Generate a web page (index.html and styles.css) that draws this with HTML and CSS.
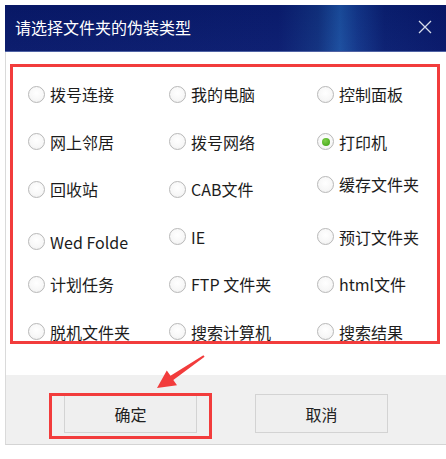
FILE: index.html
```html
<!DOCTYPE html>
<html lang="zh-CN">
<head>
    <meta charset="UTF-8">
    <meta name="viewport" content="width=device-width, initial-scale=1.0">
    <title>请选择文件夹的伪装类型</title>
    <link rel="stylesheet" href="styles.css">
</head>
<body>
    <div class="dialog">
        <div class="titlebar">
            <span class="title">请选择文件夹的伪装类型</span>
            <svg class="close" width="14" height="14" viewBox="0 0 14 14">
                <path d="M1 1 L13 13 M13 1 L1 13" stroke="#d6dbea" stroke-width="1.3" fill="none"/>
            </svg>
        </div>

        <!-- disguise types -->
        <div class="content">
            <div class="options">
                <label class="option"><span class="radio"></span>拨号连接</label>
                <label class="option"><span class="radio"></span>我的电脑</label>
                <label class="option"><span class="radio"></span>控制面板</label>

                <label class="option"><span class="radio"></span>网上邻居</label>
                <label class="option"><span class="radio"></span>拨号网络</label>
                <label class="option"><span class="radio checked"></span>打印机</label>

                <label class="option"><span class="radio"></span>回收站</label>
                <label class="option"><span class="radio"></span>CAB文件</label>
                <label class="option up"><span class="radio"></span>缓存文件夹</label>

                <label class="option down"><span class="radio"></span>Wed Folde</label>
                <label class="option"><span class="radio"></span>IE</label>
                <label class="option"><span class="radio"></span>预订文件夹</label>

                <label class="option"><span class="radio"></span>计划任务</label>
                <label class="option"><span class="radio"></span>FTP 文件夹</label>
                <label class="option"><span class="radio"></span>html文件</label>

                <label class="option"><span class="radio"></span>脱机文件夹</label>
                <label class="option"><span class="radio"></span>搜索计算机</label>
                <label class="option"><span class="radio"></span>搜索结果</label>
            </div>
        </div>

        <div class="footer">
            <button class="btn">确定</button>
            <button class="btn">取消</button>
        </div>
    </div>

    <!-- annotation marks -->
    <svg class="marks" width="446" height="459" viewBox="0 0 446 459">
        <rect x="50.5" y="394.5" width="160" height="43" fill="none" stroke="#f23c3c" stroke-width="3"/>
        <polygon fill="#f23c3c" points="157,388 166.8,370.5 170.5,375.8 203.4,355.2 204.6,356.8 173.3,380 177,385.3"/>
    </svg>
</body>
</html>
```

FILE: styles.css
```css
body {
    margin: 0;
    background: #fff;
    font-family: "Noto Sans CJK SC", "Noto Sans", sans-serif;
    color: #1c1c1c;
    width: 446px;
    height: 459px;
    position: relative;
    overflow: hidden;
}

.dialog {
    margin: 5px 0 0 5px;
    width: 441px;
}

.titlebar {
    height: 46px;
    border-bottom: 1px solid #4f62a4;
    display: flex;
    align-items: center;
    justify-content: space-between;
    padding: 0 14px 0 10px;
    background:
        linear-gradient(180deg, rgba(0, 0, 0, 0.05), rgba(255, 255, 255, 0.02)),
        linear-gradient(90deg, #08196b 0%, #0a1c70 62%, #10307f 71%, #1a4d9f 76%, #12358a 80%, #0a1f72 86%, #07176a 100%);
}

.title {
    color: #fff;
    font-size: 16px;
    line-height: 20px;
    margin-top: -2px;
}

.close {
    display: block;
    margin-top: -3px;
}

.content {
    background: #fff;
    border-left: 1px solid #dadada;
    padding: 12px 6px 31px 4px;
}

.options {
    border: 3px solid #f23c3c;
    display: grid;
    grid-template-columns: 141px 148px 1fr;
    grid-template-rows: repeat(6, 18px);
    row-gap: 29.6px;
    padding: 18px 0 0 15px;
    height: 280px;
    box-sizing: border-box;
}

.option {
    display: flex;
    align-items: center;
    height: 18px;
    font-size: 16px;
    line-height: 18px;
    white-space: nowrap;
}

.option.up {
    margin-top: -5px;
}

.option.down {
    margin-top: 5px;
}

.radio {
    width: 15px;
    height: 15px;
    border: 1px solid #b8b8b8;
    border-radius: 50%;
    background: radial-gradient(circle at 50% 40%, #ffffff 0%, #f7f7f7 60%, #e9e9e9 100%);
    margin-right: 5px;
    flex: none;
    position: relative;
}

.radio.checked::after {
    content: "";
    position: absolute;
    left: 3.5px;
    top: 3.5px;
    width: 8px;
    height: 8px;
    border-radius: 50%;
    background: radial-gradient(circle at 40% 35%, #7fd04a 0%, #4fae22 70%, #3f9a18 100%);
}

.footer {
    background: #f0f0f0;
    border-left: 1px solid #dadada;
    border-bottom: 1px solid #d4d4d4;
    height: 70px;
    display: flex;
    gap: 58px;
    padding: 19px 0 0 58px;
    box-sizing: border-box;
}

.btn {
    width: 133px;
    height: 39px;
    background: #efefef;
    border: 1px solid #d3d3d3;
    font-family: inherit;
    font-size: 16px;
    color: #222;
    padding: 0;
}

.marks {
    position: absolute;
    left: 0;
    top: 0;
    pointer-events: none;
}
```
